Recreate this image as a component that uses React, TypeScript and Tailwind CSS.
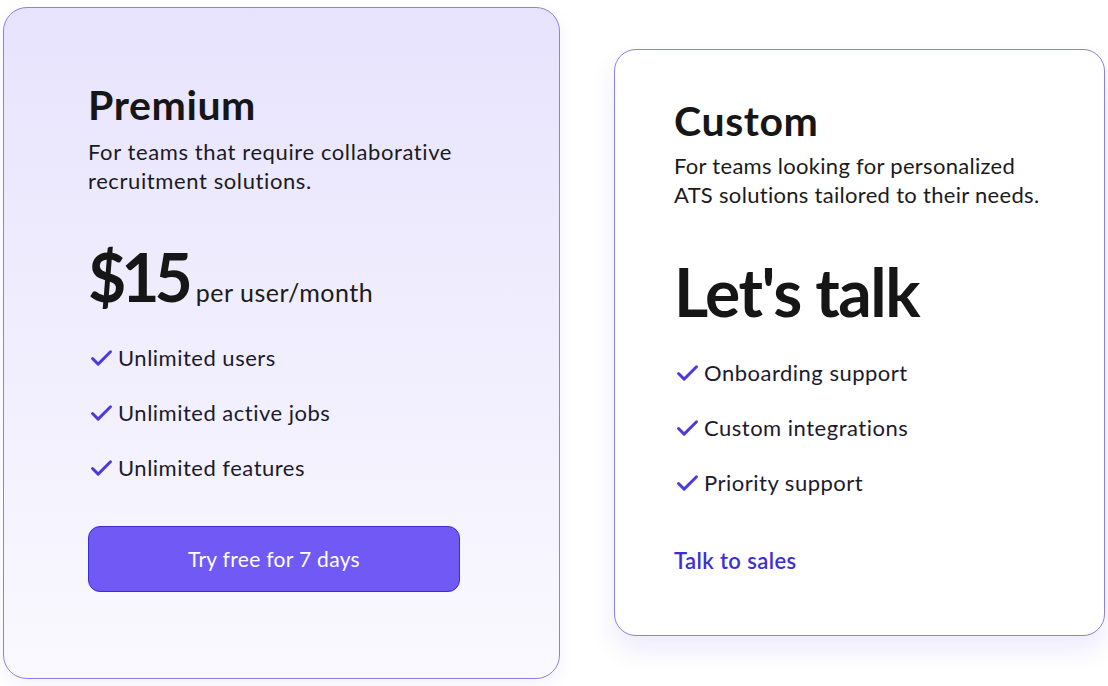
import { Check } from 'lucide-react'

const premiumFeatures = ['Unlimited users', 'Unlimited active jobs', 'Unlimited features']
const customFeatures = ['Onboarding support', 'Custom integrations', 'Priority support']

function FeatureList({ items }: { items: string[] }) {
  return (
    <ul className="flex flex-col gap-[31px]">
      {items.map((item) => (
        <li key={item} className="flex items-center gap-[3px] h-6 text-[22px] tracking-[0.5px] text-[#1c1a2e]">
          <Check className="w-[27px] h-[27px] mt-[2px] text-[#4a3ae0]" strokeWidth={2.6} />
          <span>{item}</span>
        </li>
      ))}
    </ul>
  )
}

export default function App() {
  return (
    <main
      className="min-h-[686px] w-[1108px] bg-white flex items-start overflow-hidden"
      style={{ fontFamily: 'Lato, "Noto Sans", sans-serif' }}
    >
      {/* premium card */}
      <section className="ml-[3px] mt-[7px] w-[557px] h-[672px] rounded-[24px] border border-[#8b80e3] bg-gradient-to-b from-[#e7e3fd] to-[#faf9fe] shadow-[0_6px_16px_rgba(110,90,230,0.08)] px-[84px] pt-[76px]">
        <h2 className="text-[41px] leading-none font-bold tracking-[0.6px] text-[#161616]">Premium</h2>
        <p className="mt-[12px] text-[22px] leading-[29px] tracking-[0.6px] text-[#1b1b1b]">
          For teams that require collaborative
          <br />
          recruitment solutions.
        </p>
        <div className="mt-[49px] flex items-baseline gap-[8px]">
          <span className="text-[66px] leading-none font-bold tracking-[-5px] text-[#161616]">$15</span>
          <span className="text-[25px] tracking-[0.5px] text-[#1b1b1b]">per user/month</span>
        </div>
        <div className="mt-[34px]">
          <FeatureList items={premiumFeatures} />
        </div>
        <button className="mt-[46px] w-[372px] h-[66px] rounded-[12px] bg-[#7159f5] border border-[#3b2bd2] text-white text-[21px] tracking-[0.3px]">
          Try free for 7 days
        </button>
      </section>

      {/* custom card */}
      <section className="ml-[54px] mt-[49px] w-[491px] h-[587px] rounded-[22px] border border-[#8b80e3] bg-white shadow-[0_14px_24px_rgba(110,90,230,0.12)] px-[59px] pt-[50px]">
        <h2 className="text-[41px] leading-none font-bold tracking-[0.6px] text-[#161616]">Custom</h2>
        <p className="mt-[10px] text-[22px] leading-[29px] tracking-[0.3px] text-[#1b1b1b]">
          For teams looking for personalized
          <br />
          ATS solutions tailored to their needs.
        </p>
        <div className="mt-[50px] text-[66px] leading-none font-bold tracking-[-1.5px] text-[#161616]">Let's talk</div>
        <div className="mt-[35px]">
          <FeatureList items={customFeatures} />
        </div>
        <a href="#" className="mt-[50px] block text-[22px] font-semibold tracking-[0.4px] text-[#3c2fd6]">
          Talk to sales
        </a>
      </section>
    </main>
  )
}
